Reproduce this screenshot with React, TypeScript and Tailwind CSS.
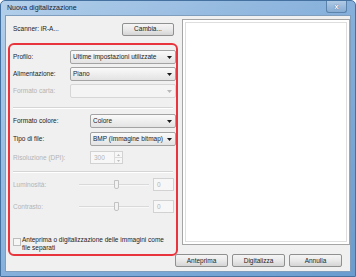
import React from 'react'

const font = { fontFamily: '"Liberation Sans", Arial, sans-serif' }

function Arrow({ disabled }: { disabled?: boolean }) {
  return (
    <svg width="5" height="3" viewBox="0 0 5 3" className="shrink-0">
      <path d="M0 0 L5 0 L2.5 3 Z" fill={disabled ? '#b8b8b8' : '#1a1a1a'} />
    </svg>
  )
}

function Select({ value, width, disabled }: { value?: string; width: string; disabled?: boolean }) {
  return (
    <div
      className={`${width} h-[14px] flex items-center justify-between pl-[2px] pr-[3px] rounded-[2px] border ${
        disabled
          ? 'border-[#d6d6d6] bg-[#f4f4f4]'
          : 'border-[#a3a3a3] bg-gradient-to-b from-[#fafafa] to-[#e3e3e3]'
      }`}
    >
      <span className="text-[#1c1c1c]">{value}</span>
      <Arrow disabled={disabled} />
    </div>
  )
}

function Label({ text, width, disabled }: { text: string; width: string; disabled?: boolean }) {
  return <span className={`${width} shrink-0 ${disabled ? 'text-[#b4b4b4]' : 'text-[#1c1c1c]'}`}>{text}</span>
}

function Slider({ label }: { label: string }) {
  return (
    <div className="flex items-center h-[13px]">
      <span className="w-[66px] shrink-0 text-[#b4b4b4]">{label}</span>
      <div className="w-[70px] flex items-center">
        <div className="w-[35px] h-[2px] bg-[#d9d9d9] border-b border-[#f8f8f8]" />
        <div className="w-[5px] h-[9px] rounded-b-[2px] border border-[#c2c2c2] bg-[#f2f2f2]" />
        <div className="flex-1 h-[2px] bg-[#d9d9d9] border-b border-[#f8f8f8]" />
      </div>
      <div className="ml-[4px] w-[21px] h-[13px] border border-[#d2d2d2] bg-[#f7f7f7] pl-[3px] flex items-center text-[#b4b4b4]">
        0
      </div>
    </div>
  )
}

function Button({ text, width }: { text: string; width: string }) {
  return (
    <div
      className={`${width} h-[13px] flex items-center justify-center rounded-[2px] border border-[#8f9090] bg-gradient-to-b from-[#f5f5f5] via-[#e9e9e9] to-[#d5d5d5] text-[#1c1c1c]`}
    >
      {text}
    </div>
  )
}

export default function App() {
  return (
    <div
      className="w-[356px] h-[277px] flex flex-col text-[6.5px] leading-[8px] bg-gradient-to-br from-[#b3cfea] via-[#86b0db] to-[#6a9ccf] border border-[#44719f] rounded-t-[5px] overflow-hidden"
      style={font}
    >
      <div className="h-[14px] flex items-start justify-between shrink-0">
        <span className="pl-[6px] pt-[3px] text-[7px] text-[#10243a]">Nuova digitalizzazione</span>
        <div className="mr-[8px] w-[21px] h-[12px] rounded-b-[3px] border border-t-0 border-[#5a82ab] bg-gradient-to-b from-[#b0cae5] to-[#86acd3] flex items-center justify-center">
          <span className="text-[8px] font-bold text-white leading-none [text-shadow:0_0_1px_#234]">x</span>
        </div>
      </div>
      <div className="flex-1 mx-[4px] mb-[4px] border border-[#7f9dbd] bg-[#f0f0f0] flex">
        <div className="ml-[2px] w-[170px] flex flex-col">
          <div className="mt-[6px] h-[14px] flex items-center justify-between pl-[5px] pr-[4px]">
            <span className="text-[#1c1c1c]">Scanner: iR-A...</span>
            <Button text="Cambia..." width="w-[52px]" />
          </div>
          <div className="mt-[7px] h-[213px] rounded-[6px] border-2 border-[#e8343c] flex flex-col pl-[3px]">
            <div className="mt-[5px] flex items-center">
              <Label text="Profilo:" width="w-[57px]" />
              <Select value="Ultime impostazioni utilizzate" width="w-[106px]" />
            </div>
            <div className="mt-[3px] flex items-center">
              <Label text="Alimentazione:" width="w-[57px]" />
              <Select value="Piano" width="w-[106px]" />
            </div>
            <div className="mt-[3px] flex items-center">
              <Label text="Formato carta:" width="w-[57px]" disabled />
              <Select width="w-[106px]" disabled />
            </div>
            <div className="mt-[9px] mr-[3px] h-[2px] border-t border-[#d5d5d5] border-b border-b-white" />
            <div className="mt-[5px] flex items-center">
              <Label text="Formato colore:" width="w-[77px]" />
              <Select value="Colore" width="w-[86px]" />
            </div>
            <div className="mt-[4px] flex items-center">
              <Label text="Tipo di file:" width="w-[77px]" />
              <Select value="BMP (Immagine bitmap)" width="w-[86px]" />
            </div>
            <div className="mt-[5px] flex items-center">
              <Label text="Risoluzione (DPI):" width="w-[77px]" disabled />
              <div className="w-[33px] h-[13px] border border-[#d2d2d2] bg-[#f7f7f7] flex">
                <span className="flex-1 pl-[3px] flex items-center text-[#b4b4b4]">300</span>
                <div className="w-[8px] flex flex-col border-l border-[#dcdcdc]">
                  <div className="flex-1 flex items-center justify-center border-b border-[#dcdcdc]">
                    <svg width="3" height="2" viewBox="0 0 3 2"><path d="M0 2 L3 2 L1.5 0 Z" fill="#bdbdbd" /></svg>
                  </div>
                  <div className="flex-1 flex items-center justify-center">
                    <svg width="3" height="2" viewBox="0 0 3 2"><path d="M0 0 L3 0 L1.5 2 Z" fill="#bdbdbd" /></svg>
                  </div>
                </div>
              </div>
            </div>
            <div className="mt-[7px] mr-[3px] h-[2px] border-t border-[#d5d5d5] border-b border-b-white" />
            <div className="mt-[5px]">
              <Slider label="Luminosità:" />
            </div>
            <div className="mt-[9px]">
              <Slider label="Contrasto:" />
            </div>
            <div className="mt-[23px] flex items-start">
              <div className="mt-[2px] w-[8px] h-[8px] border border-[#bdbdbd] bg-[#f6f6f6] shrink-0" />
              <span className="ml-[1px] text-[#1c1c1c]">
                Anteprima o digitalizzazione delle immagini come
                <br />
                file separati
              </span>
            </div>
          </div>
        </div>
        <div className="ml-[4px] w-[168px] flex flex-col">
          <div className="mt-[3px] h-[226px] border border-[#a5a5a5] bg-white p-[2px]">
            <div className="w-full h-full border border-[#dedede] bg-white" />
          </div>
          <div className="mt-[9px] -ml-[7px] flex gap-[4px]">
            <Button text="Anteprima" width="w-[53px]" />
            <Button text="Digitalizza" width="w-[53px]" />
            <Button text="Annulla" width="w-[53px]" />
          </div>
        </div>
      </div>
    </div>
  )
}
